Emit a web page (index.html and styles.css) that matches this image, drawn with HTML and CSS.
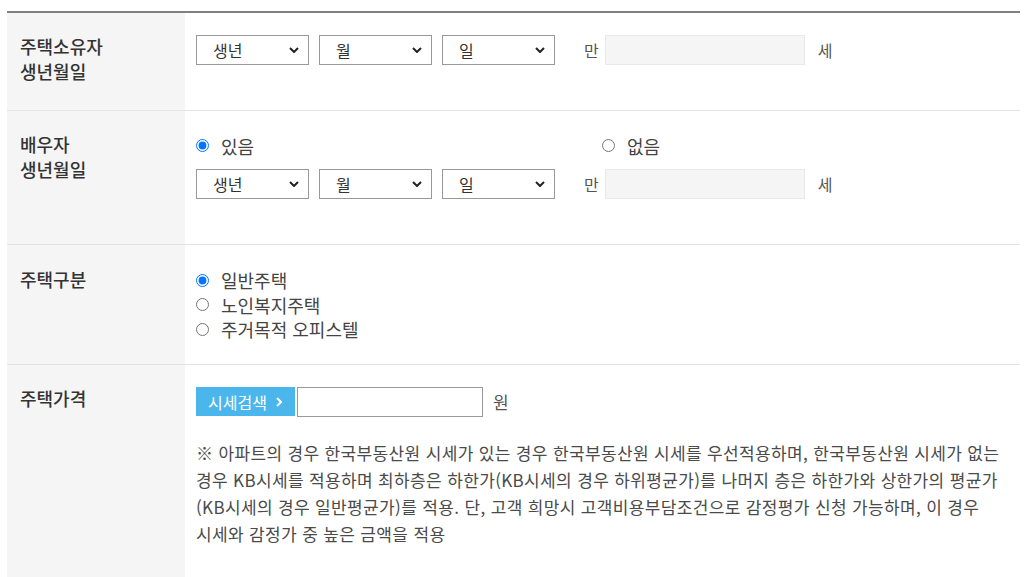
FILE: index.html
```html
<!DOCTYPE html>
<html lang="ko">
<head>
<meta charset="utf-8">
<link rel="stylesheet" href="styles.css">
</head>
<body>
<div class="form">
  <div class="row row-birth">
    <div class="label">주택소유자<br>생년월일</div>
    <div class="content">
      <div class="line">
        <div class="sel"><select><option>생년</option></select><svg class="chev" viewBox="0 0 10 6"><path d="M1 1l4 4 4-4" /></svg></div>
        <div class="sel"><select><option>월</option></select><svg class="chev" viewBox="0 0 10 6"><path d="M1 1l4 4 4-4" /></svg></div>
        <div class="sel"><select><option>일</option></select><svg class="chev" viewBox="0 0 10 6"><path d="M1 1l4 4 4-4" /></svg></div>
        <span class="unit-pre">만</span>
        <input class="age" type="text" readonly>
        <span class="unit-post">세</span>
      </div>
    </div>
  </div>
  <div class="row row-birth">
    <div class="label">배우자<br>생년월일</div>
    <div class="content">
      <div class="radios-inline">
        <label class="radio w-yes"><input type="radio" name="sp" checked><span>있음</span></label>
        <label class="radio"><input type="radio" name="sp"><span>없음</span></label>
      </div>
      <div class="line">
        <div class="sel"><select><option>생년</option></select><svg class="chev" viewBox="0 0 10 6"><path d="M1 1l4 4 4-4" /></svg></div>
        <div class="sel"><select><option>월</option></select><svg class="chev" viewBox="0 0 10 6"><path d="M1 1l4 4 4-4" /></svg></div>
        <div class="sel"><select><option>일</option></select><svg class="chev" viewBox="0 0 10 6"><path d="M1 1l4 4 4-4" /></svg></div>
        <span class="unit-pre">만</span>
        <input class="age" type="text" readonly>
        <span class="unit-post">세</span>
      </div>
    </div>
  </div>
  <div class="row row-type">
    <div class="label">주택구분</div>
    <div class="content">
      <div class="radios-stack">
        <label class="radio"><input type="radio" name="ht" checked><span>일반주택</span></label>
        <label class="radio"><input type="radio" name="ht"><span>노인복지주택</span></label>
        <label class="radio"><input type="radio" name="ht"><span>주거목적 오피스텔</span></label>
      </div>
    </div>
  </div>
  <div class="row row-last">
    <div class="label">주택가격</div>
    <div class="content">
      <div class="line price">
        <button class="search" type="button">시세검색<svg class="arrow" viewBox="0 0 6 10"><path d="M1 1l4 4-4 4" /></svg></button>
        <input class="price-input" type="text">
        <span class="unit-won">원</span>
      </div>
      <p class="note">※ 아파트의 경우 한국부동산원 시세가 있는 경우 한국부동산원 시세를 우선적용하며, 한국부동산원 시세가 없는 경우 KB시세를 적용하며 최하층은 하한가(KB시세의 경우 하위평균가)를 나머지 층은 하한가와 상한가의 평균가(KB시세의 경우 일반평균가)를 적용. 단, 고객 희망시 고객비용부담조건으로 감정평가 신청 가능하며, 이 경우 시세와 감정가 중 높은 금액을 적용</p>
    </div>
  </div>
</div>
</body>
</html>
```

FILE: styles.css
```css
* { box-sizing: border-box; }
html, body { margin: 0; padding: 0; background: #fff; }
body {
  font-family: "Noto Sans CJK KR", "Noto Sans", sans-serif;
  font-size: 16px;
  color: #444;
}
.form {
  margin: 11px 0 0 7px;
  width: 1013px;
  border-top: 2px solid #808080;
}
.row {
  display: flex;
  border-bottom: 1px solid #e3e3e3;
}
.label {
  width: 178px;
  flex: none;
  background: #f5f5f5;
  padding: 21px 0 0 13px;
  font-size: 18px;
  font-weight: 500;
  color: #333;
  line-height: 25px;
}
.content {
  flex: 1;
  padding: 22px 0 22px 11px;
}
.row-birth .content { padding-bottom: 45px; }
.row-type .content { padding: 23px 0 22.5px 11px; }
.row-type .label { padding-top: 22px; }
.line {
  display: flex;
  align-items: center;
  height: 30px;
}
.sel {
  position: relative;
  width: 113px;
  height: 30px;
  margin-right: 10px;
}
.sel select {
  appearance: none;
  -webkit-appearance: none;
  width: 100%;
  height: 100%;
  border: 1px solid #999;
  background: #fff;
  font-family: inherit;
  font-size: 16px;
  color: #333;
  padding: 0 0 0 16px;
  border-radius: 0;
}
.chev {
  position: absolute;
  right: 10px;
  top: 12px;
  width: 10px;
  height: 6px;
  fill: none;
  stroke: #222;
  stroke-width: 2;
  pointer-events: none;
}
.unit-pre { margin-left: 19px; margin-right: 6px; color: #555; }
.age {
  width: 200px;
  height: 30px;
  border: 1px solid #e8e8e8;
  background: #f5f5f5;
}
.unit-post { margin-left: 13px; color: #555; }
.radios-inline {
  display: flex;
  height: 25px;
  align-items: center;
  margin-bottom: 11px;
}
.radio {
  display: flex;
  align-items: center;
  height: 24.5px;
  font-size: 18px;
  color: #444;
}
.radio input {
  margin: 0 12px 0 0;
  width: 13px;
  height: 13px;
}
.w-yes { width: 406px; }
.radios-stack { display: flex; flex-direction: column; }
.price { height: 29px; }
.search {
  display: flex;
  align-items: center;
  height: 29px;
  width: 99px;
  border: 0;
  background: #4ab6ec;
  color: #fff;
  font-family: inherit;
  font-size: 16px;
  padding: 0 0 0 12px;
  margin-right: 2px;
}
.arrow {
  width: 6px;
  height: 10px;
  margin-left: 9px;
  fill: none;
  stroke: #fff;
  stroke-width: 2;
}
.price-input {
  width: 186px;
  height: 30px;
  border: 1px solid #999;
}
.unit-won { margin-left: 10px; color: #555; font-size: 17px; }
.note {
  margin: 23px 0 0 0;
  font-size: 17px;
  letter-spacing: 0.35px;
  line-height: 27px;
  color: #4a4a4a;
  padding-right: 15px;
  padding-bottom: 20px;
  word-break: keep-all;
}
.row-last { border-bottom: 0; }
.row-last .label { min-height: 212px; }
```
